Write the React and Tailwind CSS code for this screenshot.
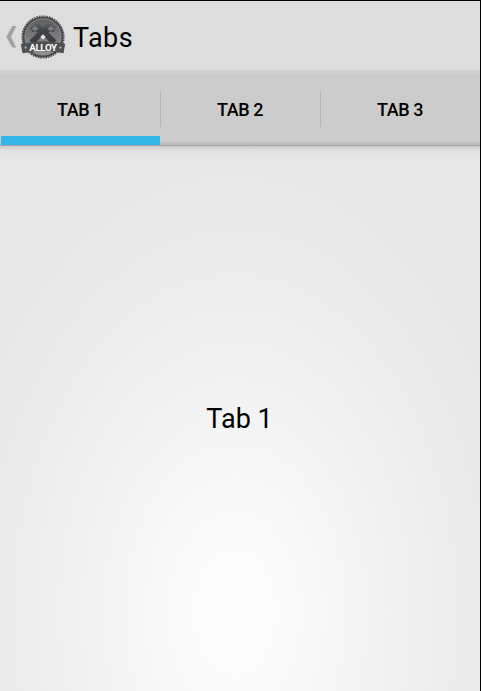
function AlloyLogo() {
  return (
    <svg width="46" height="46" viewBox="0 0 46 46" className="shrink-0">
      <defs>
        <linearGradient id="disc" x1="0" y1="0" x2="0" y2="1">
          <stop offset="0" stopColor="#5d5e60" />
          <stop offset="0.6" stopColor="#808183" />
          <stop offset="1" stopColor="#929395" />
        </linearGradient>
        <linearGradient id="tool" x1="0" y1="8" x2="0" y2="29" gradientUnits="userSpaceOnUse">
          <stop offset="0" stopColor="#606163" />
          <stop offset="0.35" stopColor="#434446" />
          <stop offset="1" stopColor="#3c3d3f" />
        </linearGradient>
      </defs>
      <circle cx="23" cy="22" r="20.6" fill="#4b4c4e" />
      <circle cx="23" cy="22" r="20.9" fill="none" stroke="#4b4c4e" strokeWidth="1.4" strokeDasharray="1.6 1" />
      <circle cx="23" cy="22" r="18.1" fill="url(#disc)" stroke="#8b8c8e" strokeWidth="0.9" />
      <path d="M16 9 H20 L23 12 L26 9 H30 L35.5 13 L33.5 17 L30.5 16 L28.5 17.5 L36.5 25.5 L32 29.5 L23 20 L14 29.5 L9.5 25.5 L17.5 17.5 L15.5 16 L12.5 17 L10.5 13 Z" fill="url(#tool)" />
      <path d="M11.8 13.2 L15.5 11 L18.3 13.8 L16.5 15.4 L13.2 15.4 Z M34.2 13.2 L30.5 11 L27.7 13.8 L29.5 15.4 L32.8 15.4 Z" fill="#7c7d80" />
      <path d="M23 19.2 L25.7 22 L23 24.8 L20.3 22 Z" fill="#e2e3e5" />
      <path d="M.8 28.7 L6 27.9 Q23 24.4 40 27.9 L45.2 28.7 L43.5 38.2 L38.3 37.4 Q23 34.8 7.7 37.4 L2.5 38.2 Z" fill="#4f5052" />
      <circle cx="5.6" cy="32.6" r="1.1" fill="#bbbcbe" />
      <circle cx="40.4" cy="32.6" r="1.1" fill="#bbbcbe" />
      <text x="9.2" y="35.5" textLength="28" lengthAdjust="spacing" fontFamily="Roboto, sans-serif" fontWeight="700" fontSize="9.8" fill="#fff">ALLOY</text>
    </svg>
  );
}

function Tab({ label, active, divided }) {
  return (
    <div className="relative flex h-[71px] w-[160px] flex-col items-center">
      <span className="mt-[25px] text-[18px] leading-[21px] font-medium tracking-[-0.4px]">{label}</span>
      {active && <span className="absolute bottom-0 left-px h-[9px] w-[159px] bg-[#33b5e5]" />}
      {divided && <span className="absolute top-[17px] left-[160px] h-9 w-px bg-[#b4b4b4]" />}
    </div>
  );
}

export default function App() {
  return (
    <div className="flex h-[691px] w-[481px] flex-col border-t border-r border-black bg-[#e7e7e7] font-['Roboto',sans-serif] text-black">
      <header className="flex h-[69px] shrink-0 items-start bg-[#dddddd]">
        <svg width="14" height="24" viewBox="0 0 14 24" className="mt-[24px] ml-[5px] shrink-0">
          <path d="M7.2 1 H11.3 L6 12 L11.3 22.5 H7.2 L1.3 12 Z" fill="#a3a3a3" />
        </svg>
        <div className="mt-[14px] ml-px"><AlloyLogo /></div>
        <h1 className="mt-[21px] ml-[7px] text-[27px] leading-8 tracking-[0.4px]">Tabs</h1>
      </header>
      <div className="h-1 shrink-0 bg-[#d2d2d2]" />
      <nav className="flex h-[72px] shrink-0 border-b border-[#a5a5a5] bg-[linear-gradient(to_bottom,#cccccc_68px,#bebebe_68px)]">
        <Tab label="TAB 1" active divided />
        <Tab label="TAB 2" divided />
        <Tab label="TAB 3" />
      </nav>
      <main className="flex grow flex-col items-center bg-[linear-gradient(to_bottom,rgba(0,0,0,0.12),rgba(0,0,0,0.03)_4px,transparent_11px),radial-gradient(305px_465px_at_235px_466px,#fcfcfc,#fbfbfb_13%,#f8f8f8_26%,#f2f2f2_48%,#ebebeb_76%,#e7e7e7)]">
        <p className="mt-[257px] mr-px text-[27px] leading-8">Tab 1</p>
      </main>
    </div>
  );
}
